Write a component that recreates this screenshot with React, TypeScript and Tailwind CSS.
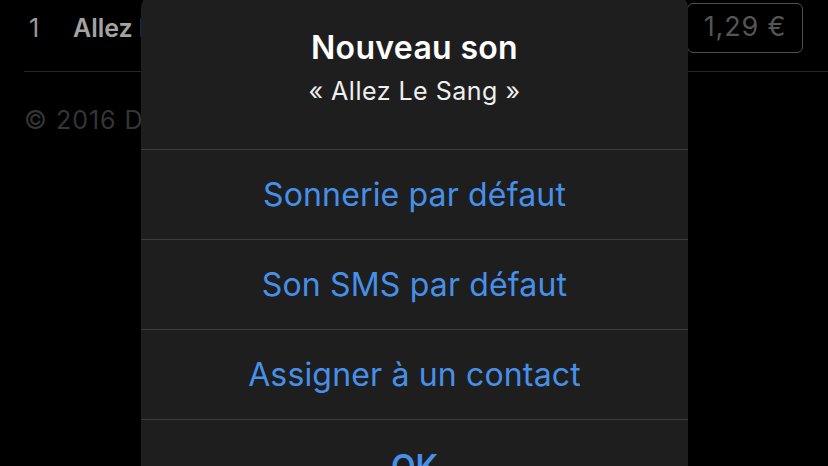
const actions = ["Sonnerie par défaut", "Son SMS par défaut", "Assigner à un contact"]

const App = () => {
    return (
        <div className="relative w-[828px] h-[466px] overflow-hidden bg-black" style={{ fontFamily: "Inter, 'Noto Sans', sans-serif" }}>
            {/* dimmed page behind the alert */}
            <div className="pl-6">
                <div className="flex items-center h-[72px] border-b border-[#262626]">
                    <span className="w-[49px] pl-[5px] -mt-[13px] text-[25px] text-[#9a9a9a]">1</span>
                    <span className="-mt-[13px] text-[25px] font-semibold text-[#a3a3a3]">Allez Le Sang</span>
                    <div className="ml-auto mr-[25px] w-[116px] h-[50px] -mt-[16px] flex items-center justify-center border-[1.5px] border-[#4e4e4e] rounded-md text-[27px] tracking-[0.03em] text-[#555]">
                        1,29 €
                    </div>
                </div>
                <div className="pt-[30px] text-[25px] tracking-[0.04em] text-[#353535]">© 2016 Disques Sang</div>
            </div>

            {/* alert */}
            <div className="absolute left-[141px] top-[-6px] w-[547px] rounded-[14px] bg-[#1e1e1e]">
                <div className="flex flex-col items-center pt-[35px] h-[155px]">
                    <div className="text-[32px] leading-[38px] font-semibold tracking-[0.01em] text-white">Nouveau son</div>
                    <div className="mt-[9px] text-[25px] leading-[30px] tracking-[0.02em] text-[#f0f0f0]">« Allez Le Sang »</div>
                </div>
                {actions.map((label) => (
                    <div key={label} className="h-[90px] flex items-center justify-center border-t-[1.5px] border-[#3c3c3c] text-[32px] tracking-[0.005em] text-[#4790ea]">
                        {label}
                    </div>
                ))}
                <div className="h-[90px] pt-[4px] flex items-center justify-center border-t-[1.5px] border-[#3c3c3c] text-[32px] font-semibold text-[#4790ea]">
                    OK
                </div>
            </div>
        </div>
    )
}

export default App
